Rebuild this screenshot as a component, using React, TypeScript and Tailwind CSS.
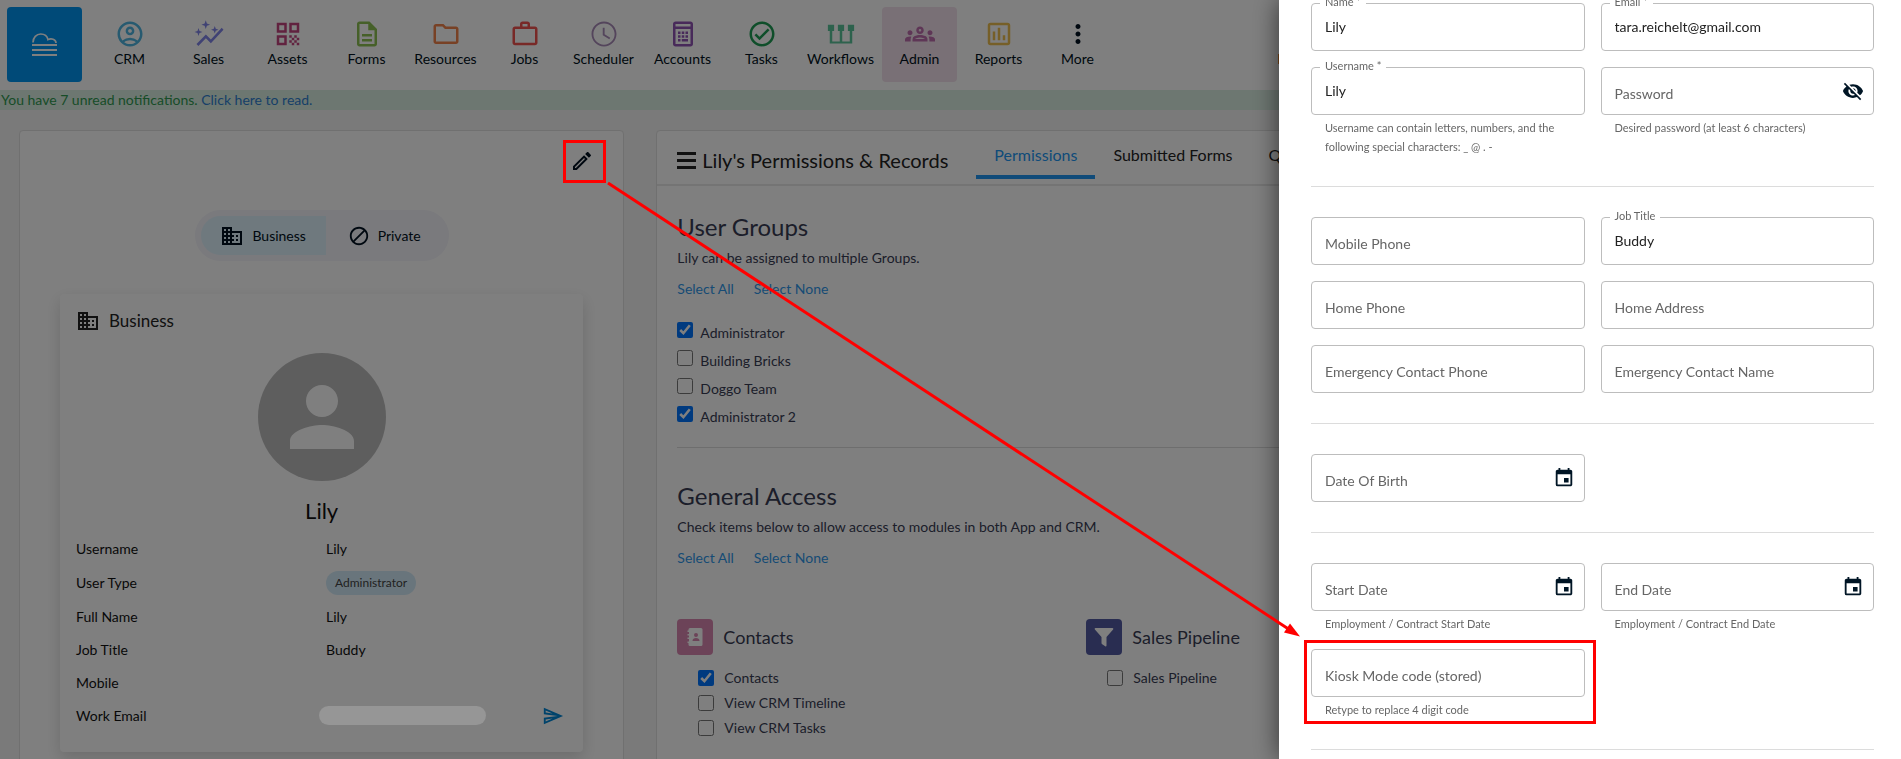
import React, { useState } from 'react';
import {
  MdBlock,
  MdBusiness,
  MdEvent,
  MdMoreVert,
  MdOutlineAccountCircle,
  MdOutlineEdit,
  MdOutlineFolder,
  MdOutlineGroups,
  MdOutlineInsertChart,
  MdOutlineSend,
  MdPerson,
  MdQrCode,
  MdVisibilityOff,
} from 'react-icons/md';

const svgProps = { width: 30, height: 30, viewBox: '0 0 24 24', fill: 'currentColor' };

const SalesIcon = () => (
  <svg {...svgProps}>
    <path d="M3.600 7.200l.8 2.400 2.400.8-2.400.8-.8 2.400-.8-2.400-2.400-.8 2.400-.8z" />
    <path d="M9.400 1l.9 2.600 2.600.9-2.600.9-.9 2.600-.9-2.600-2.600-.9 2.600-.9z" />
    <path d="M16.600 5.500l.8 2.200 2.200.8-2.200.8-.8 2.200-.8-2.200-2.200-.8 2.200-.8z" />
    <path d="M3.500 21.500l6-6.010 4 4L23.600 8.500l-1.410-1.410-8.690 9.360-4-4L2 20z" />
  </svg>
);

const FormsIcon = () => (
  <svg {...svgProps}>
    <path d="M8 16h8v2H8zm0-4h8v2H8zm6-10H6c-1.100 0-2 .9-2 2v16c0 1.100.89 2 1.990 2H18c1.100 0 2-.9 2-2V8l-6-6zm4 18H6V4h7v5h5v11z" />
  </svg>
);

const JobsIcon = () => (
  <svg {...svgProps}>
    <path d="M14 6V4h-4v2h4zM4 8v11h16V8H4zm16-2c1.110 0 2 .89 2 2v11c0 1.110-.89 2-2 2H4c-1.110 0-2-.89-2-2V8c0-1.110.89-2 2-2h4V4c0-1.110.89-2 2-2h4c1.110 0 2 .89 2 2v2h4z" />
  </svg>
);

const SchedulerIcon = () => (
  <svg {...svgProps}>
    <path d="M11.990 2C6.470 2 2 6.480 2 12s4.470 10 9.990 10C17.520 22 22 17.520 22 12S17.520 2 11.990 2zM12 20.500c-4.700 0-8.500-3.800-8.500-8.500S7.300 3.500 12 3.500s8.500 3.800 8.500 8.500-3.800 8.500-8.500 8.500zm.5-13.500H11v6l5.250 3.150.75-1.230-4.500-2.670z" />
  </svg>
);

const AccountsIcon = () => (
  <svg {...svgProps}>
    <path fillRule="evenodd" d="M6 2h12c1.100 0 2 .9 2 2v16c0 1.100-.9 2-2 2H6c-1.100 0-2-.9-2-2V4c0-1.100.9-2 2-2zm0 2v2h12V4H6zm0 4v12h12V8H6z" />
    <path d="M8 10h2v2H8zm3 0h2v2h-2zm3 0h2v2h-2zm-6 3h2v2H8zm3 0h2v2h-2zm3 0h2v2h-2zm-6 3h2v2H8zm3 0h5v2h-5z" />
  </svg>
);

const TasksIcon = () => (
  <svg {...svgProps}>
    <path d="M12 2C6.480 2 2 6.480 2 12s4.480 10 10 10 10-4.480 10-10S17.520 2 12 2zm0 18c-4.410 0-8-3.590-8-8s3.590-8 8-8 8 3.590 8 8-3.590 8-8 8zm4.590-12.420L10 14.170l-2.590-2.580L6 13l4 4 8-8z" />
  </svg>
);

const WorkflowsIcon = () => (
  <svg {...svgProps}>
    <path d="M1.500 4.500h5v5H5V18h6V9.500H9.500v-5h5v5H13V18h6V9.500h-1.500v-5h5v5h-1.500v10H3v-10H1.500z" />
  </svg>
);

const NAV_ITEMS = [
  { label: 'CRM', icon: <MdOutlineAccountCircle size={30} />, color: 'text-[#4fb5e0]' },
  { label: 'Sales', icon: <SalesIcon />, color: 'text-[#8085e8]' },
  { label: 'Assets', icon: <MdQrCode size={30} />, color: 'text-[#c2447f]' },
  { label: 'Forms', icon: <FormsIcon />, color: 'text-[#8cc152]' },
  { label: 'Resources', icon: <MdOutlineFolder size={30} />, color: 'text-[#f0834a]' },
  { label: 'Jobs', icon: <JobsIcon />, color: 'text-[#f0524f]' },
  { label: 'Scheduler', icon: <SchedulerIcon />, color: 'text-[#a98bb8]' },
  { label: 'Accounts', icon: <AccountsIcon />, color: 'text-[#9054b4]' },
  { label: 'Tasks', icon: <TasksIcon />, color: 'text-[#1f9d55]' },
  { label: 'Workflows', icon: <WorkflowsIcon />, color: 'text-[#5bc49a]' },
  { label: 'Admin', icon: <MdOutlineGroups size={30} />, color: 'text-[#bd6cac]', active: true },
  { label: 'Reports', icon: <MdOutlineInsertChart size={30} />, color: 'text-[#ecbf50]' },
  { label: 'More', icon: <MdMoreVert size={30} />, color: 'text-[#001020]' },
];

const DETAILS = [
  { label: 'Username', value: 'Lily' },
  { label: 'User Type', value: 'Administrator', chip: true },
  { label: 'Full Name', value: 'Lily' },
  { label: 'Job Title', value: 'Buddy' },
  { label: 'Mobile', value: '' },
];

const GROUPS = [
  { name: 'Administrator', on: true },
  { name: 'Building Bricks', on: false },
  { name: 'Doggo Team', on: false },
  { name: 'Administrator 2', on: true },
];

function Header() {
  return (
    <header className="flex h-[90px] items-start bg-white pt-[7px] pl-[7px]">
      <a href="#home" aria-label="Home" className="mr-[10px] flex size-[75px] items-center justify-center rounded bg-[#0094f0] text-white">
        <svg width="25" height="23" viewBox="0 0 25 23" fill="none" stroke="currentColor" strokeWidth="2">
          <path d="M1 9.500C1 4.500 4.500 1 8.700 1c3.500 0 6.500 2 7.300 5.600 3-1.600 8-.6 8 3.400" strokeWidth="1.700" />
          <path d="M0 12h25M0 17h25M0 22h25" />
        </svg>
      </a>
      <nav className="flex gap-1">
        {NAV_ITEMS.map(item => (
          <a
            key={item.label}
            href="#nav"
            className={`flex h-[75px] w-[75px] flex-col items-center rounded pt-3 ${item.active ? 'bg-[#f3e1ec]' : ''}`}
          >
            <span className={item.color}>{item.icon}</span>
            <span className="text-sm leading-5 text-[#001020]">{item.label}</span>
          </a>
        ))}
      </nav>
      <span className="mt-[47px] ml-[163px] h-[10px] w-[2px] bg-[#f08c2e]" />
    </header>
  );
}

function ProfileCard() {
  return (
    <section className="h-[800px] rounded-t border border-[#e0e0e0] bg-white px-10">
      <div className="flex justify-end pt-[17px]">
        <button aria-label="Edit" className="-mr-3 p-[1px] text-[#001020]">
          <MdOutlineEdit size={24} />
        </button>
      </div>

      <div className="mx-auto mt-9 flex w-[254px] rounded-full bg-[#f4f4fa] p-[6px] text-sm text-[#001020]">
        <button className="flex h-[39px] w-[125px] items-center justify-center gap-2 rounded-l-full bg-[#def2fd]">
          <MdBusiness size={24} /> Business
        </button>
        <button className="flex h-[39px] flex-1 items-center justify-center gap-2">
          <MdBlock size={22} /> Private
        </button>
      </div>

      <div className="mt-[33px] h-[458px] rounded bg-white px-4 pt-[15px] shadow-[0_6px_16px_rgba(0,0,0,0.15)]">
        <h2 className="flex items-center gap-[9px] text-[17px] leading-6 text-[#222]">
          <MdBusiness size={24} /> Business
        </h2>
        <div className="mx-auto mt-5 flex size-32 items-center justify-center rounded-full bg-[#bdbdbd] text-white">
          <MdPerson size={96} />
        </div>
        <h3 className="mt-4 text-center text-[22px] leading-7 text-[#111]">Lily</h3>
        <dl className="mt-[7px] text-sm text-[#111]">
          {DETAILS.map(row => (
            <div key={row.label} className={row.chip ? 'flex h-[35px] items-center' : 'flex h-[33px] items-center'}>
              <dt className="w-[250px]">{row.label}</dt>
              <dd>
                {row.chip ? (
                  <span className="block rounded-full bg-[#d3ebf8] px-[9px] text-xs leading-6 text-[#444]">{row.value}</span>
                ) : (
                  row.value
                )}
              </dd>
            </div>
          ))}
          <div className="flex h-[33px] items-center">
            <dt className="w-[243px]">Work Email</dt>
            <dd className="flex flex-1 items-center">
              <span className="relative z-20 h-[19px] w-[167px] rounded-full bg-[#969696]" />
              <button aria-label="Send email" className="mr-[3px] ml-auto text-[#0086d6]">
                <MdOutlineSend size={22} />
              </button>
            </dd>
          </div>
        </dl>
      </div>
    </section>
  );
}

type CheckProps = { label: string; defaultChecked?: boolean; className?: string };

function GroupCheck({ label, defaultChecked }: CheckProps) {
  return (
    <label className="flex h-7 items-start gap-[7px]">
      <input type="checkbox" defaultChecked={defaultChecked} className="mt-[3px] size-4 accent-[#0075ff]" />
      <span className="leading-7">{label}</span>
    </label>
  );
}

function ModuleCheck({ label, defaultChecked }: CheckProps) {
  return (
    <label className="flex h-[25px] items-center gap-[10px]">
      <input type="checkbox" defaultChecked={defaultChecked} className="size-4 accent-[#0075ff]" />
      <span>{label}</span>
    </label>
  );
}

function SelectLinks() {
  return (
    <p className="mt-[11px] flex gap-5 leading-5 text-[#2f97ea]">
      <a href="#all">Select All</a>
      <a href="#none">Select None</a>
    </p>
  );
}

function Permissions() {
  return (
    <section className="h-[800px] min-w-0 overflow-hidden rounded-t border border-[#e0e0e0] bg-white">
      <div className="flex h-[55px] items-start border-b-2 border-[#e8e8e8] pl-5 text-[#222]">
        <h1 className="flex w-[299px] items-center gap-[6px] pt-[15px] text-xl leading-7 whitespace-nowrap">
          <svg width="19" height="17" viewBox="0 0 19 17" fill="currentColor">
            <path d="M0 0h19v3H0zM0 7h19v3H0zM0 14h19v3H0z" />
          </svg>
          Lily's Permissions &amp; Records
        </h1>
        <nav className="flex text-base leading-[22px] whitespace-nowrap">
          <a href="#permissions" className="border-b-4 border-[#2196f3] px-[18px] pt-[13px] pb-[9px] text-[#2196f3]">Permissions</a>
          <a href="#forms" className="px-[18px] pt-[13px]">Submitted Forms</a>
          <a href="#qualifications" className="px-[18px] pt-[13px]">Qualifications</a>
        </nav>
      </div>

      <div className="px-5 text-sm text-[#383c54]">
        <h2 className="pt-[27px] text-2xl leading-7">User Groups</h2>
        <p className="mt-[7px] leading-5">Lily can be assigned to multiple Groups.</p>
        <SelectLinks />
        <div className="mt-5">
          {GROUPS.map(g => (
            <GroupCheck key={g.name} label={g.name} defaultChecked={g.on} />
          ))}
        </div>

        <hr className="mt-4 border-[#dcdcdc]" />
        <h2 className="pt-[34px] text-2xl leading-7">General Access</h2>
        <p className="mt-[7px] leading-5">Check items below to allow access to modules in both App and CRM.</p>
        <SelectLinks />

        <div className="mt-[51px] grid grid-cols-[35%_1fr]">
          <div>
            <h3 className="flex items-center gap-[10px] text-lg leading-9">
              <span className="flex size-9 items-center justify-center rounded bg-[#d887b0] text-white">
                <svg width="18" height="18" viewBox="0 0 18 18">
                  <path
                    fill="currentColor"
                    fillRule="evenodd"
                    d="M4 0h11a1.500 1.500 0 0 1 1.500 1.500v15A1.500 1.500 0 0 1 15 18H4a1.500 1.500 0 0 1-1.500-1.500V15H1.500v-1.500h1.500V11H1.500V9.500h1.500V7.500H1.500V6h1.500V4H1.500V2.500h1V1.500A1.500 1.500 0 0 1 4 0zm6 5a2 2 0 1 0 0 4 2 2 0 0 0 0-4zM6.500 13h7c0-2.200-1.500-3-3.500-3s-3.500.8-3.500 3z"
                  />
                </svg>
              </span>
              Contacts
            </h3>
            <div className="mt-[10px] pl-[21px]">
              <ModuleCheck label="Contacts" defaultChecked />
              <ModuleCheck label="View CRM Timeline" />
              <ModuleCheck label="View CRM Tasks" />
            </div>
          </div>
          <div>
            <h3 className="flex items-center gap-[10px] text-lg leading-9">
              <span className="flex size-9 items-center justify-center rounded bg-[#525aa2] text-white">
                <svg width="20" height="20" viewBox="0 0 20 20" fill="currentColor">
                  <path d="M1.500 1h17c.8 0 1.100.8.6 1.400L12.500 10v8.500c0 .8-.7 1.100-1.300.7l-3-2c-.4-.3-.7-.6-.7-1.100V10L.9 2.400C.4 1.800.7 1 1.500 1z" />
                </svg>
              </span>
              Sales Pipeline
            </h3>
            <div className="mt-[10px] pl-[21px]">
              <ModuleCheck label="Sales Pipeline" />
            </div>
          </div>
        </div>
      </div>
    </section>
  );
}

type FieldProps = { id: string; label: string; value?: string; helper?: string; type?: string; icon?: React.ReactNode };

function Field({ id, label, value = '', helper, type = 'text', icon }: FieldProps) {
  const [text, setText] = useState(value);

  return (
    <div>
      <div className="relative flex h-12 items-center rounded border border-[#bdbdbd] pr-[9px] pl-[13px]">
        <input
          id={id}
          type={type}
          value={text}
          onChange={e => setText(e.target.value)}
          className="min-w-0 flex-1 text-sm text-[#222] outline-none"
        />
        <label
          htmlFor={id}
          className={
            text
              ? 'absolute -top-2 left-2 bg-white px-[5px] text-[11px] leading-3 text-[#666]'
              : 'absolute top-4 left-[13px] text-sm leading-5 text-[#666]'
          }
        >
          {label}
        </label>
        {icon && <button type="button" aria-label={`${label} options`} className="text-[#001525]">{icon}</button>}
      </div>
      {helper && <p className="mt-[3px] px-[14px] text-[11px] leading-[19px] text-[#666]">{helper}</p>}
    </div>
  );
}

const Divider = () => <hr className="my-[30px] border-[#dcdcdc]" />;

function EditDrawer() {
  return (
    <aside className="fixed inset-y-0 right-0 z-30 w-[622px] overflow-hidden bg-white pt-[3px] pr-[27px] pl-8 shadow-[0_0_24px_rgba(0,0,0,0.6)]">
      <form>
        <div className="grid grid-cols-2 gap-4">
          <Field id="name" label="Name *" value="Lily" />
          <Field id="email" label="Email *" value="tara.reichelt@gmail.com" />
          <Field
            id="username"
            label="Username *"
            value="Lily"
            helper="Username can contain letters, numbers, and the following special characters: _ @ . -"
          />
          <Field id="password" label="Password" type="password" helper="Desired password (at least 6 characters)" icon={<MdVisibilityOff size={22} />} />
        </div>
        <Divider />
        <div className="grid grid-cols-2 gap-4">
          <Field id="mobile" label="Mobile Phone" />
          <Field id="job" label="Job Title" value="Buddy" />
          <Field id="home-phone" label="Home Phone" />
          <Field id="home-address" label="Home Address" />
          <Field id="emergency-phone" label="Emergency Contact Phone" />
          <Field id="emergency-name" label="Emergency Contact Name" />
        </div>
        <Divider />
        <div className="grid grid-cols-2 gap-4">
          <Field id="dob" label="Date Of Birth" icon={<MdEvent size={22} />} />
        </div>
        <Divider />
        <div className="grid grid-cols-2 gap-4">
          <Field id="start" label="Start Date" helper="Employment / Contract Start Date" icon={<MdEvent size={22} />} />
          <Field id="end" label="End Date" helper="Employment / Contract End Date" icon={<MdEvent size={22} />} />
          <Field id="kiosk" label="Kiosk Mode code (stored)" helper="Retype to replace 4 digit code" />
        </div>
        <Divider />
      </form>
    </aside>
  );
}

// Red call-outs: edit button -> kiosk code field
function Annotations() {
  return (
    <svg className="pointer-events-none fixed top-0 left-0 z-40" width="1901" height="759" viewBox="0 0 1901 759" fill="none" stroke="#ff0000" strokeWidth="3">
      <rect x="564.500" y="141.500" width="40" height="40" />
      <rect x="1305.500" y="641.500" width="289" height="81" />
      <path d="M608 183L1290 630" />
      <path d="M1300 636.500L1290 623.500L1284 632.500Z" fill="#ff0000" stroke="none" />
    </svg>
  );
}

export default function App() {
  return (
    <div className="h-screen overflow-hidden bg-[#f4f4f4] font-['Lato',sans-serif]">
      <Header />
      <p className="h-5 bg-[#dbeee3] pl-[1px] text-sm leading-5 text-[#2f9a50]">
        You have 7 unread notifications. <a href="#notifications" className="text-[#2f80d0]">Click here to read.</a>
      </p>
      <main className="mt-5 grid grid-cols-[1fr_2fr] gap-8 pr-[34px] pl-[19px]">
        <ProfileCard />
        <Permissions />
      </main>
      <div className="fixed inset-0 z-10 bg-black/50" />
      <EditDrawer />
      <Annotations />
    </div>
  );
}
